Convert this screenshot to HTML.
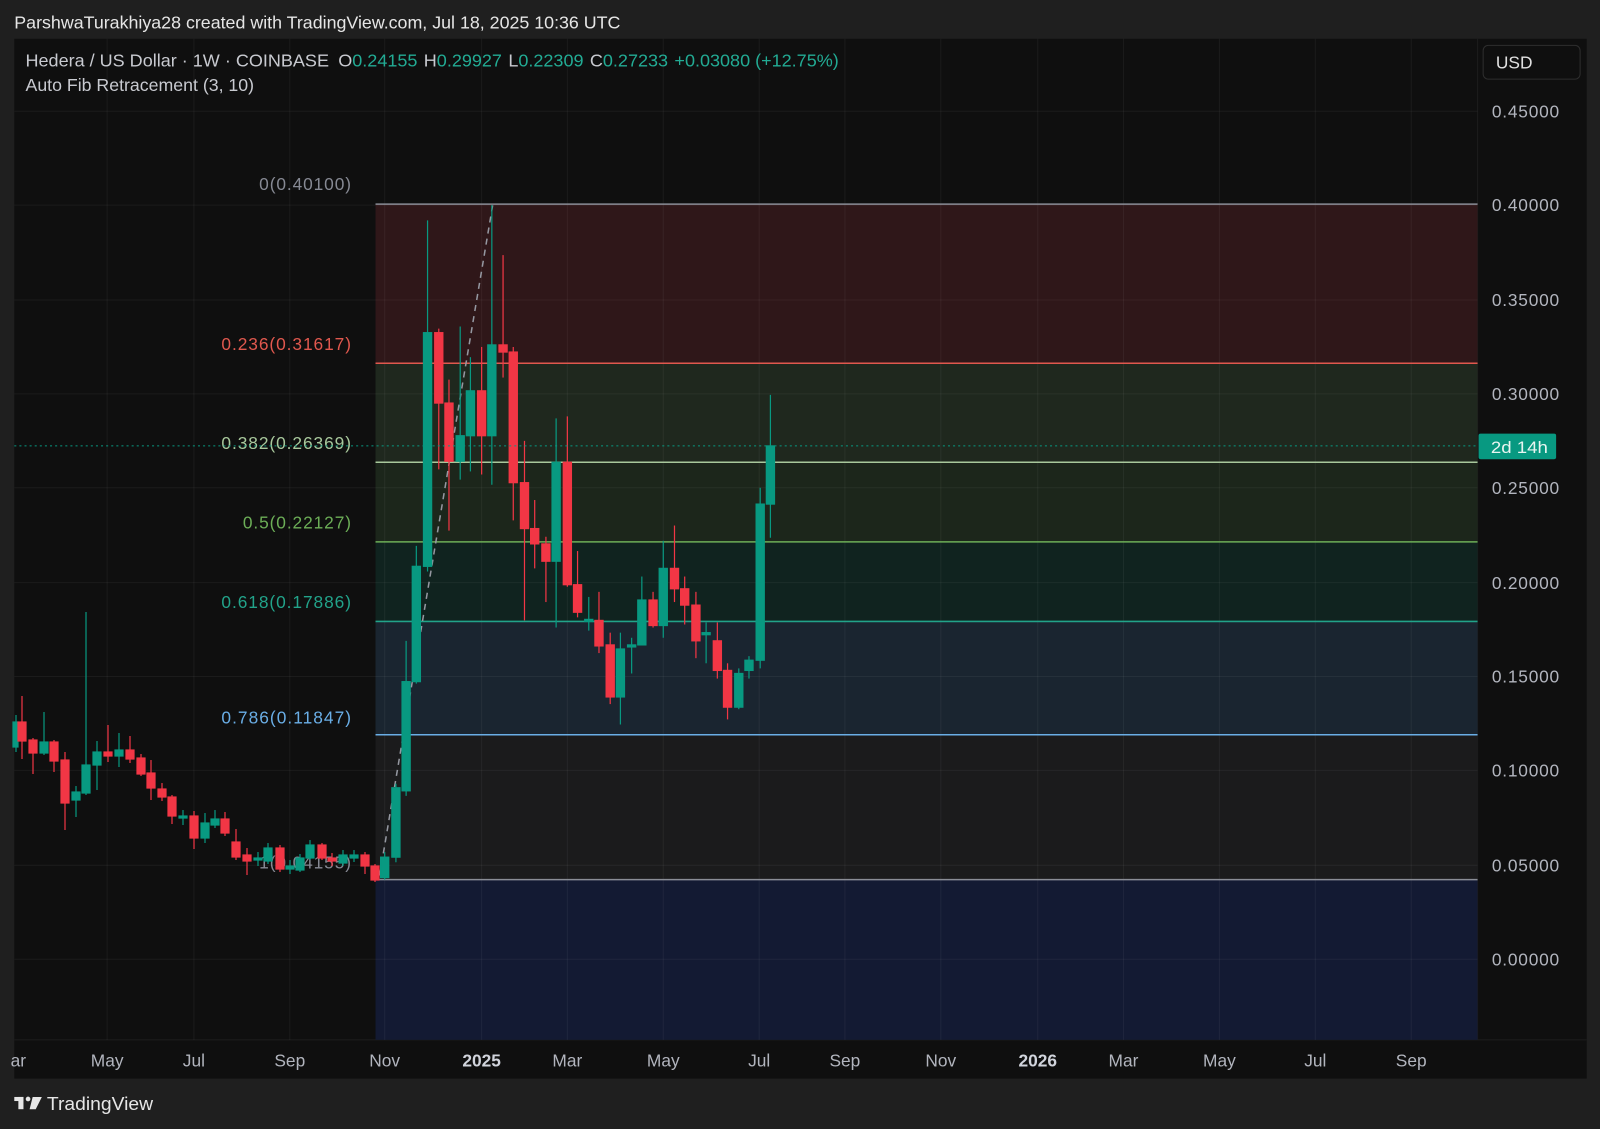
<!DOCTYPE html>
<html><head><meta charset="utf-8"><style>
html,body{margin:0;padding:0;background:#1f1f1f;}
svg{display:block}
text{font-family:"Liberation Sans",sans-serif}
</style></head><body>
<svg width="1600" height="1129" viewBox="0 0 1568 1106.4" preserveAspectRatio="none" xmlns="http://www.w3.org/2000/svg">
<rect x="0" y="0" width="1568" height="1107" fill="#1f1f1f"/>
<rect x="14" y="38" width="1541" height="1019" fill="#0f0f0f"/>
<line x1="1448" y1="38" x2="1448" y2="1019" stroke="#1c1c1c"/>
<line x1="14" y1="1019" x2="1555" y2="1019" stroke="#1c1c1c"/>
<rect x="368" y="200" width="1080" height="156" fill="#2f1719"/>
<rect x="368" y="356" width="1080" height="97" fill="#1f281e"/>
<rect x="368" y="453" width="1080" height="78" fill="#1c261b"/>
<rect x="368" y="531" width="1080" height="78" fill="#10231f"/>
<rect x="368" y="609" width="1080" height="111" fill="#1a2530"/>
<rect x="368" y="720" width="1080" height="142" fill="#1b1b1c"/>
<rect x="368" y="862" width="1080" height="157" fill="#131a33"/>
<g stroke="#ffffff" stroke-opacity="0.05">
<line x1="14" y1="109" x2="1448" y2="109"/><line x1="14" y1="201" x2="1448" y2="201"/>
<line x1="14" y1="294" x2="1448" y2="294"/><line x1="14" y1="386" x2="1448" y2="386"/>
<line x1="14" y1="478" x2="1448" y2="478"/><line x1="14" y1="571" x2="1448" y2="571"/>
<line x1="14" y1="663" x2="1448" y2="663"/><line x1="14" y1="755" x2="1448" y2="755"/>
<line x1="14" y1="848" x2="1448" y2="848"/><line x1="14" y1="940" x2="1448" y2="940"/>
<line x1="105" y1="38" x2="105" y2="1019"/><line x1="190" y1="38" x2="190" y2="1019"/>
<line x1="284" y1="38" x2="284" y2="1019"/><line x1="377" y1="38" x2="377" y2="1019"/>
<line x1="472" y1="38" x2="472" y2="1019"/><line x1="556" y1="38" x2="556" y2="1019"/>
<line x1="650" y1="38" x2="650" y2="1019"/><line x1="744" y1="38" x2="744" y2="1019"/>
<line x1="828" y1="38" x2="828" y2="1019"/><line x1="922" y1="38" x2="922" y2="1019"/>
<line x1="1017" y1="38" x2="1017" y2="1019"/><line x1="1101" y1="38" x2="1101" y2="1019"/>
<line x1="1195" y1="38" x2="1195" y2="1019"/><line x1="1289" y1="38" x2="1289" y2="1019"/>
<line x1="1383" y1="38" x2="1383" y2="1019"/>
</g>
<line x1="368" y1="200" x2="1448" y2="200" stroke="#8a8d96" stroke-width="1.5"/>
<line x1="368" y1="356" x2="1448" y2="356" stroke="#e0584e" stroke-width="1.5"/>
<line x1="368" y1="453" x2="1448" y2="453" stroke="#a8c89c" stroke-width="1.5"/>
<line x1="368" y1="531" x2="1448" y2="531" stroke="#6cae57" stroke-width="1.5"/>
<line x1="368" y1="609" x2="1448" y2="609" stroke="#22a38a" stroke-width="1.5"/>
<line x1="368" y1="720" x2="1448" y2="720" stroke="#6aaee6" stroke-width="1.5"/>
<line x1="368" y1="862" x2="1448" y2="862" stroke="#8a8d96" stroke-width="1.5"/>
<line x1="372" y1="858" x2="483" y2="200" stroke="#9598a1" stroke-width="1.5" stroke-dasharray="6,5"/>
<g font-size="17" lengthAdjust="spacingAndGlyphs">
<text x="254" y="186" fill="#868993" textLength="90">0(0.40100)</text>
<text x="217" y="343" fill="#e0584e" textLength="127">0.236(0.31617)</text>
<text x="217" y="440" fill="#a8c89c" textLength="127">0.382(0.26369)</text>
<text x="238" y="518" fill="#6cae57" textLength="106">0.5(0.22127)</text>
<text x="217" y="596" fill="#22a38a" textLength="127">0.618(0.17886)</text>
<text x="217" y="709" fill="#6aaee6" textLength="127">0.786(0.11847)</text>
<text x="254" y="851" fill="#868993" textLength="90">1(0.04155)</text>
</g>
<g transform="scale(0.98)" stroke-width="1.2">
<g fill="#089981" stroke="#089981">
<line x1="16" y1="715" x2="16" y2="752"/><rect x="13" y="722" width="5" height="25"/>
<line x1="44" y1="712" x2="44" y2="755"/><rect x="40" y="742" width="8" height="11"/>
<line x1="76" y1="786" x2="76" y2="817"/><rect x="72" y="792" width="8" height="8"/>
<line x1="86" y1="612" x2="86" y2="795"/><rect x="82" y="765" width="8" height="28"/>
<line x1="97" y1="741" x2="97" y2="790"/><rect x="93" y="752" width="8" height="13"/>
<line x1="119" y1="733" x2="119" y2="767"/><rect x="115" y="750" width="8" height="6"/>
<line x1="183" y1="810" x2="183" y2="825"/><rect x="179" y="816" width="8" height="2"/>
<line x1="205" y1="813" x2="205" y2="843"/><rect x="201" y="823" width="8" height="15"/>
<line x1="215" y1="810" x2="215" y2="828"/><rect x="211" y="819" width="8" height="6"/>
<line x1="258" y1="852" x2="258" y2="866"/><rect x="254" y="858" width="8" height="2"/>
<line x1="268" y1="843" x2="268" y2="864"/><rect x="264" y="848" width="8" height="13"/>
<line x1="290" y1="860" x2="290" y2="874"/><rect x="286" y="866" width="8" height="3"/>
<line x1="300" y1="854" x2="300" y2="872"/><rect x="296" y="858" width="8" height="12"/>
<line x1="310" y1="840" x2="310" y2="860"/><rect x="306" y="845" width="8" height="13"/>
<line x1="343" y1="850" x2="343" y2="866"/><rect x="339" y="855" width="8" height="8"/>
<line x1="354" y1="850" x2="354" y2="862"/><rect x="350" y="855" width="8" height="3"/>
</g>
<g fill="#f23645" stroke="#f23645">
<line x1="22" y1="696" x2="22" y2="759"/><rect x="18" y="722" width="8" height="19"/>
<line x1="33" y1="738" x2="33" y2="774"/><rect x="29" y="740" width="8" height="13"/>
<line x1="54" y1="740" x2="54" y2="772"/><rect x="50" y="742" width="8" height="19"/>
<line x1="65" y1="752" x2="65" y2="830"/><rect x="61" y="760" width="8" height="43"/>
<line x1="108" y1="725" x2="108" y2="762"/><rect x="104" y="752" width="8" height="4"/>
<line x1="130" y1="736" x2="130" y2="763"/><rect x="126" y="750" width="8" height="9"/>
<line x1="141" y1="754" x2="141" y2="776"/><rect x="137" y="758" width="8" height="16"/>
<line x1="151" y1="760" x2="151" y2="800"/><rect x="147" y="773" width="8" height="15"/>
<line x1="162" y1="783" x2="162" y2="801"/><rect x="158" y="789" width="8" height="8"/>
<line x1="172" y1="795" x2="172" y2="824"/><rect x="168" y="797" width="8" height="19"/>
<line x1="194" y1="811" x2="194" y2="849"/><rect x="190" y="816" width="8" height="22"/>
<line x1="225" y1="812" x2="225" y2="836"/><rect x="221" y="819" width="8" height="14"/>
<line x1="236" y1="829" x2="236" y2="860"/><rect x="232" y="842" width="8" height="15"/>
<line x1="247" y1="848" x2="247" y2="875"/><rect x="243" y="855" width="8" height="6"/>
<line x1="280" y1="845" x2="280" y2="872"/><rect x="276" y="848" width="8" height="21"/>
<line x1="322" y1="843" x2="322" y2="860"/><rect x="318" y="845" width="8" height="13"/>
<line x1="332" y1="853" x2="332" y2="866"/><rect x="328" y="858" width="8" height="3"/>
<line x1="365" y1="852" x2="365" y2="874"/><rect x="361" y="855" width="8" height="11"/>
<line x1="375" y1="864" x2="375" y2="882"/><rect x="371" y="866" width="8" height="14"/>
</g>
</g>
<g stroke-width="1.2">
<g fill="#089981" stroke="#089981">
<line x1="377" y1="835" x2="377" y2="862"/><rect x="373" y="840" width="8" height="20"/>
<line x1="388" y1="768" x2="388" y2="845"/><rect x="384" y="772" width="8" height="68"/>
<line x1="398" y1="628" x2="398" y2="780"/><rect x="394" y="668" width="8" height="107"/>
<line x1="408" y1="535" x2="408" y2="670"/><rect x="404" y="555" width="8" height="113"/>
<line x1="419" y1="216" x2="419" y2="560"/><rect x="415" y="326" width="8" height="229"/>
<line x1="451" y1="320" x2="451" y2="470"/><rect x="447" y="427" width="8" height="25"/>
<line x1="461" y1="350" x2="461" y2="462"/><rect x="457" y="383" width="8" height="44"/>
<line x1="482" y1="201" x2="482" y2="475"/><rect x="478" y="338" width="8" height="89"/>
<line x1="545" y1="410" x2="545" y2="615"/><rect x="541" y="453" width="8" height="97"/>
<line x1="577" y1="585" x2="577" y2="618"/><rect x="573" y="607" width="8" height="2"/>
<line x1="608" y1="620" x2="608" y2="710"/><rect x="604" y="636" width="8" height="47"/>
<line x1="619" y1="625" x2="619" y2="660"/><rect x="615" y="632" width="8" height="2"/>
<line x1="629" y1="565" x2="629" y2="628"/><rect x="625" y="588" width="8" height="44"/>
<line x1="650" y1="530" x2="650" y2="625"/><rect x="646" y="557" width="8" height="56"/>
<line x1="692" y1="610" x2="692" y2="650"/><rect x="688" y="620" width="8" height="2"/>
<line x1="724" y1="655" x2="724" y2="695"/><rect x="720" y="660" width="8" height="33"/>
<line x1="734" y1="643" x2="734" y2="665"/><rect x="730" y="647" width="8" height="10"/>
<line x1="745" y1="478" x2="745" y2="655"/><rect x="741" y="494" width="8" height="153"/>
<line x1="755" y1="387" x2="755" y2="527"/><rect x="751" y="437" width="8" height="57"/>
</g>
<g fill="#f23645" stroke="#f23645">
<line x1="430" y1="322" x2="430" y2="460"/><rect x="426" y="326" width="8" height="69"/>
<line x1="440" y1="372" x2="440" y2="520"/><rect x="436" y="395" width="8" height="57"/>
<line x1="472" y1="340" x2="472" y2="465"/><rect x="468" y="383" width="8" height="44"/>
<line x1="493" y1="250" x2="493" y2="370"/><rect x="489" y="338" width="8" height="7"/>
<line x1="503" y1="340" x2="503" y2="510"/><rect x="499" y="345" width="8" height="128"/>
<line x1="514" y1="432" x2="514" y2="608"/><rect x="510" y="473" width="8" height="45"/>
<line x1="524" y1="490" x2="524" y2="557"/><rect x="520" y="518" width="8" height="15"/>
<line x1="535" y1="526" x2="535" y2="590"/><rect x="531" y="533" width="8" height="17"/>
<line x1="556" y1="408" x2="556" y2="575"/><rect x="552" y="453" width="8" height="120"/>
<line x1="566" y1="540" x2="566" y2="605"/><rect x="562" y="573" width="8" height="27"/>
<line x1="587" y1="580" x2="587" y2="640"/><rect x="583" y="608" width="8" height="25"/>
<line x1="598" y1="620" x2="598" y2="690"/><rect x="594" y="632" width="8" height="51"/>
<line x1="640" y1="580" x2="640" y2="615"/><rect x="636" y="588" width="8" height="25"/>
<line x1="661" y1="515" x2="661" y2="590"/><rect x="657" y="557" width="8" height="20"/>
<line x1="671" y1="565" x2="671" y2="612"/><rect x="667" y="577" width="8" height="16"/>
<line x1="682" y1="580" x2="682" y2="645"/><rect x="678" y="593" width="8" height="35"/>
<line x1="703" y1="610" x2="703" y2="665"/><rect x="699" y="628" width="8" height="29"/>
<line x1="713" y1="650" x2="713" y2="705"/><rect x="709" y="657" width="8" height="36"/>
</g>
</g>
<line x1="14" y1="437" x2="1448" y2="437" stroke="#089981" stroke-width="1" stroke-dasharray="2,3"/>
<rect x="1449" y="425" width="76" height="25" rx="2" fill="#089981"/>
<text x="1461" y="444" font-size="16" fill="#e8f5f1" textLength="56" lengthAdjust="spacingAndGlyphs">2d 14h</text>
<g font-size="17" fill="#b2b5be" lengthAdjust="spacingAndGlyphs">
<text x="1462" y="115" textLength="66">0.45000</text><text x="1462" y="207" textLength="66">0.40000</text>
<text x="1462" y="300" textLength="66">0.35000</text><text x="1462" y="392" textLength="66">0.30000</text>
<text x="1462" y="484" textLength="66">0.25000</text><text x="1462" y="577" textLength="66">0.20000</text>
<text x="1462" y="669" textLength="66">0.15000</text><text x="1462" y="761" textLength="66">0.10000</text>
<text x="1462" y="854" textLength="66">0.05000</text><text x="1462" y="946" textLength="66">0.00000</text>
</g>
<rect x="1453.5" y="44.5" width="95" height="33" rx="5" fill="#0f0f0f" stroke="#2e2e2e"/>
<text x="1466" y="67" font-size="17" fill="#e0e0e0">USD</text>
<g font-size="17" fill="#b2b5be" text-anchor="middle">
<text x="18" y="1045">ar</text><text x="105" y="1045">May</text><text x="190" y="1045">Jul</text>
<text x="284" y="1045">Sep</text><text x="377" y="1045">Nov</text>
<text x="472" y="1045" font-weight="bold" fill="#d1d4dc">2025</text>
<text x="556" y="1045">Mar</text><text x="650" y="1045">May</text><text x="744" y="1045">Jul</text>
<text x="828" y="1045">Sep</text><text x="922" y="1045">Nov</text>
<text x="1017" y="1045" font-weight="bold" fill="#d1d4dc">2026</text>
<text x="1101" y="1045">Mar</text><text x="1195" y="1045">May</text><text x="1289" y="1045">Jul</text>
<text x="1383" y="1045">Sep</text>
</g>
<text x="14" y="28" font-size="17" fill="#e6e6e6" textLength="594" lengthAdjust="spacingAndGlyphs">ParshwaTurakhiya28 created with TradingView.com, Jul 18, 2025 10:36 UTC</text>
<text x="25" y="65" font-size="17" fill="#c8cad0" textLength="797" lengthAdjust="spacingAndGlyphs">Hedera / US Dollar · 1W · COINBASE <tspan dx="4">O</tspan><tspan fill="#22ab94">0.24155</tspan><tspan dx="6">H</tspan><tspan fill="#22ab94">0.29927</tspan><tspan dx="6">L</tspan><tspan fill="#22ab94">0.22309</tspan><tspan dx="6">C</tspan><tspan fill="#22ab94">0.27233</tspan><tspan dx="6" fill="#22ab94">+0.03080 (+12.75%)</tspan></text>
<text x="25" y="89" font-size="17" fill="#c8cad0" textLength="224" lengthAdjust="spacingAndGlyphs">Auto Fib Retracement (3, 10)</text>
<g fill="#e6e6e6">
<rect x="14" y="1075" width="9" height="4"/><rect x="18" y="1075" width="5" height="12"/>
<circle cx="27.5" cy="1077" r="2.3"/>
<polygon points="32,1075 41,1075 35,1087 29,1087"/>
</g>
<text x="46" y="1088" font-size="18" fill="#e6e6e6" textLength="104" lengthAdjust="spacingAndGlyphs">TradingView</text>
</svg>
</body></html>
